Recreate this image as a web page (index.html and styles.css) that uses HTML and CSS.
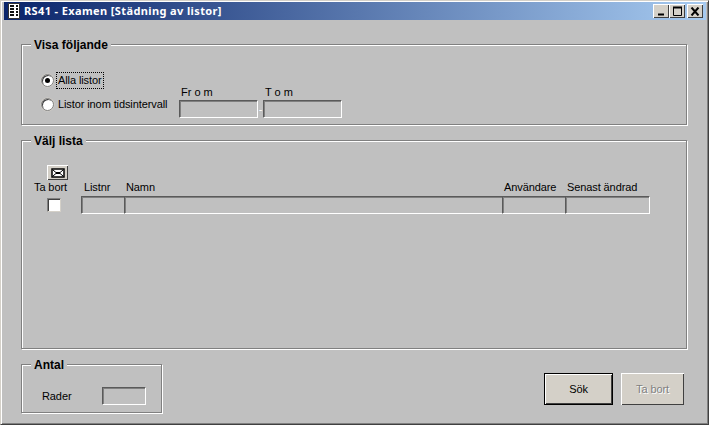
FILE: index.html
```html
<!DOCTYPE html>
<html lang="sv">
<head>
<meta charset="utf-8">
<title>RS41 - Examen</title>
<link rel="stylesheet" href="styles.css">
</head>
<body>
<div class="window">
  <header class="titlebar">
    <svg class="app-icon" width="14" height="16" viewBox="0 0 14 16">
      <path d="M1.500.5h11v15h-11z" fill="#fff" stroke="#333"/>
      <path d="M3 3h4M9 3h2M3 6h4M9 6h2M3 9h4M9 9h2M3 12h4M9 12h2" stroke="#111" stroke-width="2"/>
    </svg>
    <span class="title-text">RS41 - Examen [Städning av listor]</span>
    <div class="win-buttons">
      <span class="win-btn"><svg width="10" height="9" viewBox="0 0 10 9"><path d="M2 7.500h6" stroke="#000" stroke-width="2"/></svg></span>
      <span class="win-btn"><svg width="11" height="10" viewBox="0 0 11 10"><path d="M1.500 1.500h8v8h-8z" fill="none" stroke="#000"/><path d="M1 1.500h9" stroke="#000" stroke-width="2"/></svg></span>
      <span class="win-btn win-close"><svg width="10" height="9" viewBox="0 0 10 9"><path d="M1.500 .5l7 8M8.500 .5l-7 8" stroke="#000" stroke-width="2"/></svg></span>
    </div>
  </header>

  <main class="client">
    <fieldset class="group group-show">
      <legend>Visa följande</legend>
      <div class="show-row">
        <div class="radios">
          <div class="radio-row">
            <span class="radio radio-on"></span>
            <span class="radio-label focus">Alla listor</span>
          </div>
          <div class="radio-row">
            <span class="radio"></span>
            <span class="radio-label">Listor inom tidsintervall</span>
          </div>
        </div>
        <div class="date-range">
          <div class="date-field">
            <span class="spaced">Fr o m</span>
            <span class="field date-input"></span>
          </div>
          <span class="dash">-</span>
          <div class="date-field">
            <span class="spaced">T o m</span>
            <span class="field date-input"></span>
          </div>
        </div>
      </div>
    </fieldset>

    <fieldset class="group group-list">
      <legend>Välj lista</legend>
      <div class="list-grid">
        <div class="delete-col">
          <span class="mail-btn">
            <svg width="14" height="10" viewBox="0 0 14 10"><path d="M1 1h12v8H1z" fill="#fff" stroke="#000" stroke-width="1.500"/><path d="M2 2l3.500 3L2 8M12 2L8.500 5 12 8M5 4.500h4M5 5.500h4" fill="none" stroke="#000"/></svg>
          </span>
          <span class="delete-head">Ta bort</span>
          <span class="checkbox"></span>
        </div>
        <div class="table">
          <span class="th">Listnr</span>
          <span class="th">Namn</span>
          <span class="th">Användare</span>
          <span class="th">Senast ändrad</span>
          <span class="field cell"></span>
          <span class="field cell"></span>
          <span class="field cell"></span>
          <span class="field cell"></span>
        </div>
      </div>
    </fieldset>

    <div class="bottom">
      <fieldset class="group group-count">
        <legend>Antal</legend>
        <div class="count-row">
          <span>Rader</span>
          <span class="field count-input"></span>
        </div>
      </fieldset>
      <div class="actions">
        <button class="btn btn-default" type="button">Sök</button>
        <button class="btn btn-disabled" type="button">Ta bort</button>
      </div>
    </div>
  </main>
</div>
</body>
</html>
```

FILE: styles.css
```css
* { box-sizing: border-box; }
html, body { margin: 0; padding: 0; background: #fff; }
body { width: 709px; height: 426px; overflow: hidden; font: 11px/13px "Liberation Sans", Arial, sans-serif; letter-spacing: -.1px; color: #000; }

.window {
  width: 709px;
  height: 425px;
  background: #c0c0c0;
  border-top: 1px solid #d4d0c8;
  border-left: 1px solid #d4d0c8;
  border-right: 1px solid #404040;
  border-bottom: 1px solid #404040;
  box-shadow: inset 1px 1px 0 #fff, inset -1px -1px 0 #808080;
  padding: 1px 2px 2px 3px;
  display: flex;
  flex-direction: column;
}

.titlebar {
  height: 18px;
  flex: none;
  display: flex;
  align-items: center;
  padding: 0 3px 0 3px;
  background: linear-gradient(90deg, #0a246a, #a6caf0);
}
.app-icon { flex: none; margin-right: 3px; }
.title-text {
  color: #fff;
  font: bold 11px/14px "Noto Sans", Tahoma, sans-serif;
  letter-spacing: .38px;
  white-space: nowrap;
}
.win-buttons { margin-left: auto; display: flex; }
.win-btn {
  width: 16px;
  height: 14px;
  background: #d4d0c8;
  box-shadow: inset 1px 1px 0 #fff, inset -1px -1px 0 #404040;
  display: flex;
  align-items: center;
  justify-content: center;
}
.win-close { margin-left: 2px; }

.client { flex: 1; padding: 16px 19px 0 17px; display: flex; flex-direction: column; }

.group {
  margin: 0;
  padding: 0;
  min-width: 0;
  border: 1px solid #808080;
  box-shadow: 1px 1px 0 #fff, inset 1px 1px 0 #fff;
}
.group legend {
  margin-left: 9px;
  padding: 2px 3px 0;
  background: #c0c0c0;
  font: bold 12px/14px "Liberation Sans", Arial, sans-serif;
  letter-spacing: 0;
}

.group-show { height: 89px; }
.show-row { display: flex; padding: 20px 0 0 19px; }
.radios { width: 138px; flex: none; display: flex; flex-direction: column; gap: 7px; }
.radio-row { display: flex; align-items: center; gap: 4px; height: 17px; }
.radio {
  width: 13px;
  height: 13px;
  flex: none;
  border-radius: 50%;
  background: #fff;
  border: 1px solid #808080;
  box-shadow: inset 1px 1px 0 #404040, 0 0 0 .5px #d4d0c8;
  display: flex;
  align-items: center;
  justify-content: center;
}
.radio-on::after { content: ""; width: 5px; height: 5px; border-radius: 50%; background: #000; }
.radio-label { padding: 1px; border: 1px dotted transparent; line-height: 13px; white-space: nowrap; margin-left: -2px; }
.focus { border-color: #000; }

.date-range { display: flex; align-items: flex-end; margin-top: 13px; }
.date-field { display: flex; flex-direction: column; }
.spaced { padding-left: 2px; letter-spacing: 0; line-height: 14px; margin-bottom: 1px; }
.dash { width: 5px; text-align: center; color: #fff; line-height: 17px; }
.field {
  display: block;
  background: #c0c0c0;
  border: 1px solid;
  border-color: #5a5a5a #fff #fff #5a5a5a;
  box-shadow: inset 1px 1px 0 #808080;
}
.date-input { width: 79px; height: 18px; }

.group-list { height: 217px; margin-top: 7px; }
.list-grid { display: flex; padding: 17px 0 0 12px; }
.delete-col { width: 47px; flex: none; display: flex; flex-direction: column; align-items: flex-start; }
.mail-btn {
  width: 21px;
  height: 15px;
  margin-left: 13px;
  display: flex;
  align-items: center;
  justify-content: center;
  background: #d4d0c8;
  box-shadow: inset 1px 1px 0 #fff, inset -1px -1px 0 #404040;
}
.delete-head { margin-top: 1px; white-space: nowrap; }
.checkbox {
  width: 14px;
  height: 14px;
  margin: 4px 0 0 13px;
  background: #fff;
  border: 1px solid #808080;
  border-right-color: #d4d0c8;
  border-bottom-color: #d4d0c8;
  box-shadow: inset 1px 1px 0 #404040;
}
.table {
  display: grid;
  grid-template-columns: 43px 378px 63px 85px;
  grid-template-rows: 13px 18px;
  row-gap: 2px;
  margin-top: 16px;
}
.th { padding-left: 2px; white-space: nowrap; }
.th:first-child { padding-left: 3px; }
.cell { height: 18px; }
.cell:not(:last-child) { border-right-width: 0; }

.bottom { display: flex; justify-content: space-between; margin-top: 7px; }
.group-count { width: 141px; height: 57px; flex: none; }
.count-row { display: flex; align-items: center; gap: 31px; padding: 15px 0 0 20px; }
.count-input { width: 44px; height: 18px; }

.actions { display: flex; gap: 8px; margin: 17px 3px 0 0; }
.btn {
  margin: 0;
  padding: 0;
  height: 32px;
  background: #d4d0c8;
  border: 0;
  font: 11px/13px "Liberation Sans", Arial, sans-serif;
  letter-spacing: -.1px;
  color: #000;
}
.btn-default {
  width: 69px;
  border: 1px solid #000;
  box-shadow: inset 1px 1px 0 #fff, inset -1px -1px 0 #404040;
}
.btn-disabled {
  width: 63px;
  color: #808080;
  text-shadow: 1px 1px 0 #fff;
  box-shadow: inset 1px 1px 0 #fff, inset -1px -1px 0 #404040;
}
```
